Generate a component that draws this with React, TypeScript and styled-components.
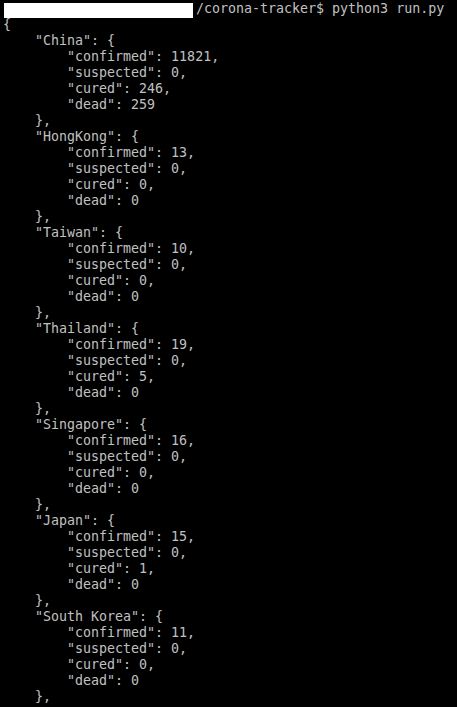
import React from "react";
import styled, { createGlobalStyle } from "styled-components";

const Global = createGlobalStyle`
  html, body { margin: 0; padding: 0; background: #000; }
  body { width: 457px; height: 707px; overflow: hidden; }
`;

const Terminal = styled.div`
  background: #000;
  color: #c0c0c0;
  font-family: "DejaVu Sans Mono", "Liberation Mono", monospace;
  font-size: 13.3px;
  line-height: 16px;
  padding: 1px 0 0 3px;
  height: 707px;
  box-sizing: border-box;
  white-space: pre;
`;

const Line = styled.div`
  height: 16px;
`;

const Redacted = styled.span`
  display: inline-block;
  width: 189px;
  height: 15px;
  background: #fff;
  vertical-align: top;
  margin: 2px 3px 0 1px;
`;

type Stats = { confirmed: number; suspected: number; cured: number; dead: number };

const data: [string, Stats][] = [
  ["China", { confirmed: 11821, suspected: 0, cured: 246, dead: 259 }],
  ["HongKong", { confirmed: 13, suspected: 0, cured: 0, dead: 0 }],
  ["Taiwan", { confirmed: 10, suspected: 0, cured: 0, dead: 0 }],
  ["Thailand", { confirmed: 19, suspected: 0, cured: 5, dead: 0 }],
  ["Singapore", { confirmed: 16, suspected: 0, cured: 0, dead: 0 }],
  ["Japan", { confirmed: 15, suspected: 0, cured: 1, dead: 0 }],
  ["South Korea", { confirmed: 11, suspected: 0, cured: 0, dead: 0 }],
];

export default function App() {
  const lines: string[] = ["{"];
  data.forEach(([name, s]) => {
    lines.push(`    "${name}": {`);
    lines.push(`        "confirmed": ${s.confirmed},`);
    lines.push(`        "suspected": ${s.suspected},`);
    lines.push(`        "cured": ${s.cured},`);
    lines.push(`        "dead": ${s.dead}`);
    lines.push(`    },`);
  });
  return (
    <>
      <Global />
      <Terminal>
        <Line>
          <Redacted />
          /corona-tracker$ python3 run.py
        </Line>
        {lines.map((l, i) => (
          <Line key={i}>{l}</Line>
        ))}
      </Terminal>
    </>
  );
}
